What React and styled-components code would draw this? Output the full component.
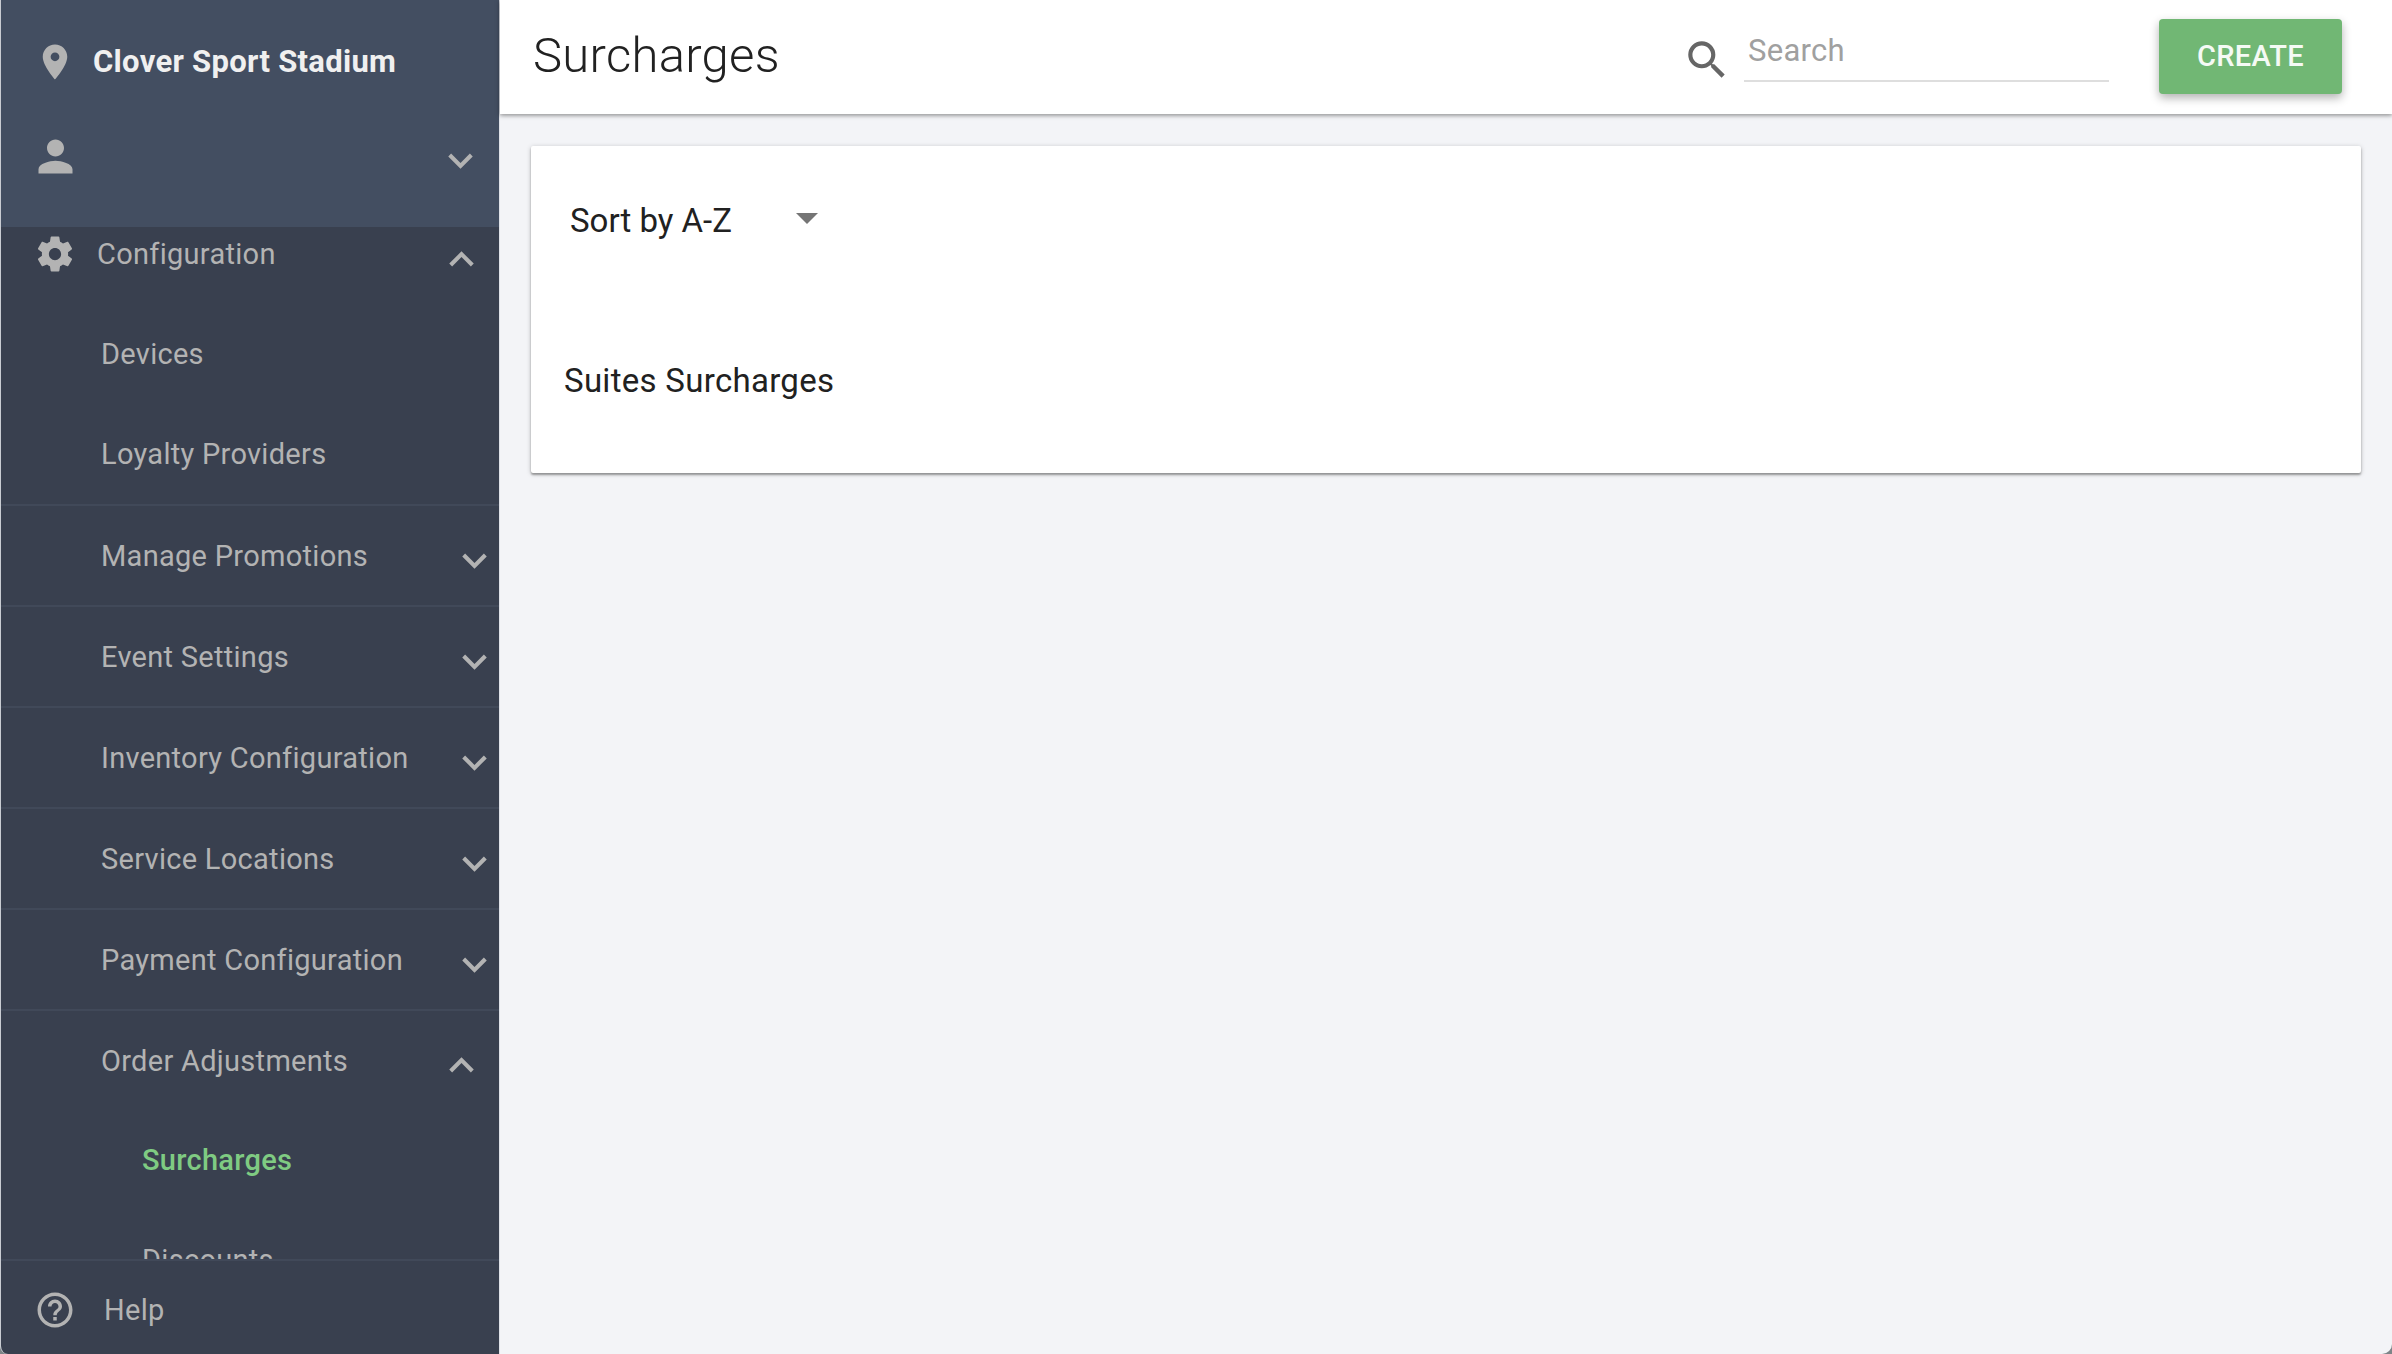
import React, { useState } from "react";
import styled, { createGlobalStyle, css } from "styled-components";
import { MdExpandLess, MdExpandMore, MdHelpOutline, MdPerson, MdPlace, MdSearch } from "react-icons/md";

const GlobalStyle = createGlobalStyle`
  *, *::before, *::after { box-sizing: border-box; }
  body {
    margin: 0;
    background: #7d8588;
    color: #212121;
    font-family: Roboto, "Liberation Sans", sans-serif;
    font-size: 29px;
    letter-spacing: 0.01em;
  }
  button, input, select { font: inherit; letter-spacing: inherit; color: inherit; }
  ul { list-style: none; margin: 0; padding: 0; }
`;

const Shell = styled.div`
  display: flex;
  height: 100vh;
  overflow: hidden;
  border-left: 1px solid #c9ccd2;
  border-radius: 0 0 10px 8px;
  background: #f3f4f7;
`;

const Sidebar = styled.aside`
  display: flex;
  flex-direction: column;
  flex: 0 0 498px;
  background: #39404f;
  color: #b3b3b3;
`;

const Account = styled.div`
  flex: none;
  background: #434e61;
  padding-bottom: 38px;
`;

const IconSlot = styled.span`
  display: flex;
  flex: none;
  justify-content: center;
  width: ${(p) => p.$width || 92}px;
  padding-right: ${(p) => (p.$width || 92) - 82}px;
  padding-left: 26px;
  svg { flex: none; }
`;

const Venue = styled.div`
  display: flex;
  align-items: center;
  height: 123px;
  color: #f0f0f0;
  font-size: 31px;
  font-weight: 700;
  svg { color: #b3b3b3; }
`;

const UserButton = styled.button`
  display: flex;
  align-items: center;
  width: 100%;
  height: 66px;
  padding: 0 14px 0 0;
  border: 0;
  background: none;
  color: #b3b3b3;
`;

const Nav = styled.nav`
  flex: 1;
  min-height: 0;
  overflow: hidden;
`;

const rowStyle = css`
  display: flex;
  align-items: center;
  width: 100%;
  height: 100px;
  border: 0;
  background: none;
  color: inherit;
  text-align: left;
  text-decoration: none;
`;

const SectionButton = styled.button`
  ${rowStyle}
  height: 77px;
  padding: 0 13px 23px 0;
`;

const GroupButton = styled.button`
  ${rowStyle}
  height: 101px;
  padding: 0 ${(p) => (p.$open ? 13 : 0)}px 0 100px;
  border-top: 2px solid #414959;
`;

const NavLink = styled.a`
  ${rowStyle}
  padding-left: ${(p) => (p.$nested ? 141 : 100)}px;
  color: ${(p) => (p.$active ? "#7fcb82" : "inherit")};
  font-weight: ${(p) => (p.$active ? 500 : 400)};
`;

const Chevron = styled.span`
  display: flex;
  margin: ${(p) => p.$drop || 10}px 0 0 auto;
`;

const HelpLink = styled.a`
  ${rowStyle}
  flex: none;
  height: 95px;
  padding-top: 4px;
  border-top: 2px solid #414959;
`;

const Main = styled.main`
  flex: 1;
  min-width: 0;
  border-left: 1px solid #dfe2e8;
`;

const TopBar = styled.header`
  display: flex;
  height: 114px;
  padding: 0 50px 0 33px;
  background: #fff;
  box-shadow: 0 1px 5px rgba(0, 0, 0, 0.35), 0 2px 3px rgba(0, 0, 0, 0.12);
`;

const Title = styled.h1`
  flex: 1;
  margin: 0;
  font-size: 49px;
  font-weight: 300;
  line-height: 112px;
`;

const SearchBox = styled.label`
  display: flex;
  align-items: flex-start;
  gap: 12px;
  margin-right: 50px;
  padding-top: 20px;
  > svg { margin-top: 15px; color: #666; }
`;

const SearchInput = styled.input`
  width: 365px;
  height: 62px;
  padding: 0 4px;
  border: 0;
  border-bottom: 2px solid #dedede;
  outline: 0;
  background: none;
  font-size: 31px;
  &::placeholder { color: #a0a0a0; opacity: 1; }
`;

const CreateButton = styled.button`
  width: 183px;
  height: 75px;
  margin-top: 19px;
  padding: 0 0 2px;
  border: 0;
  border-radius: 4px;
  background: #71b774;
  color: #f5faf5;
  font-weight: 500;
  text-transform: uppercase;
  box-shadow: 0 4px 10px rgba(0, 0, 0, 0.3);
`;

const Card = styled.section`
  margin: 32px 31px;
  padding: 48px 33px 66px;
  background: #fff;
  border-radius: 2px;
  box-shadow: 0 2px 2px rgba(0, 0, 0, 0.3), 0 1px 5px rgba(0, 0, 0, 0.22);
  font-size: 33px;
`;

const SortField = styled.label`
  display: flex;
  align-items: center;
  margin-left: 6px;
  height: 52px;
  letter-spacing: 0;
  svg { margin: -4px 0 0 -22px; pointer-events: none; }
`;

const SortSelect = styled.select`
  width: 248px;
  height: 52px;
  padding: 0;
  border: 0;
  outline: 0;
  appearance: none;
  background: none;
`;

const SurchargeList = styled.ul`
  margin-top: 109px;
  line-height: 52px;
`;

const Gear = () => (
  <svg width="42" height="42" viewBox="0 0 24 24" fill="currentColor" aria-hidden="true">
    <path d="M19.43 12.98c.04-.32.07-.64.07-.98s-.03-.66-.07-.98l2.11-1.65c.19-.15.24-.42.12-.64l-2-3.46c-.12-.22-.39-.3-.61-.22l-2.49 1c-.52-.4-1.08-.73-1.69-.98l-.38-2.65C14.46 2.18 14.25 2 14 2h-4c-.25 0-.46.18-.49.42l-.38 2.65c-.61.25-1.17.59-1.69.98l-2.49-1c-.23-.09-.49 0-.61.22l-2 3.46c-.13.22-.07.49.12.64l2.11 1.65c-.04.32-.07.65-.07.98s.03.66.07.98l-2.11 1.65c-.19.15-.24.42-.12.64l2 3.46c.12.22.39.3.61.22l2.49-1c.52.4 1.08.73 1.69.98l.38 2.65c.03.24.24.42.49.42h4c.25 0 .46-.18.49-.42l.38-2.65c.61-.25 1.17-.59 1.69-.98l2.49 1c.23.09.49 0 .61-.22l2-3.46c.12-.22.07-.49-.12-.64l-2.11-1.65zM12 15.5c-1.93 0-3.5-1.57-3.5-3.5s1.57-3.5 3.5-3.5 3.5 1.57 3.5 3.5-1.57 3.5-3.5 3.5z" />
  </svg>
);

const groups = [
  "Manage Promotions",
  "Event Settings",
  "Inventory Configuration",
  "Service Locations",
  "Payment Configuration",
];

function Group({ label, open }) {
  return (
    <GroupButton type="button" $open={open} aria-expanded={Boolean(open)}>
      {label}
      <Chevron>{open ? <MdExpandLess size={49} /> : <MdExpandMore size={49} />}</Chevron>
    </GroupButton>
  );
}

export default function App() {
  const [query, setQuery] = useState("");
  return (
    <>
      <GlobalStyle />
      <Shell>
        <Sidebar>
          <Account>
            <Venue>
              <IconSlot><MdPlace size={42} /></IconSlot>
              Clover Sport Stadium
            </Venue>
            <UserButton type="button" aria-label="Account">
              <IconSlot><MdPerson size={51} /></IconSlot>
              <Chevron $drop={8}><MdExpandMore size={49} /></Chevron>
            </UserButton>
          </Account>
          <Nav>
            <SectionButton type="button" aria-expanded="true">
              <IconSlot $width={96}><Gear /></IconSlot>
              Configuration
              <Chevron><MdExpandLess size={49} /></Chevron>
            </SectionButton>
            <NavLink href="#devices">Devices</NavLink>
            <NavLink href="#loyalty">Loyalty Providers</NavLink>
            {groups.map((g) => <Group key={g} label={g} />)}
            <Group label="Order Adjustments" open />
            <NavLink href="#surcharges" $nested $active aria-current="page">Surcharges</NavLink>
            <NavLink href="#discounts" $nested>Discounts</NavLink>
          </Nav>
          <HelpLink href="#help">
            <IconSlot $width={103}><MdHelpOutline size={42} /></IconSlot>
            Help
          </HelpLink>
        </Sidebar>
        <Main>
          <TopBar>
            <Title>Surcharges</Title>
            <SearchBox>
              <MdSearch size={50} aria-hidden="true" />
              <SearchInput
                type="search"
                placeholder="Search"
                aria-label="Search"
                value={query}
                onChange={(e) => setQuery(e.target.value)}
              />
            </SearchBox>
            <CreateButton type="button">Create</CreateButton>
          </TopBar>
          <Card>
            <SortField>
              <SortSelect aria-label="Sort order" defaultValue="az">
                <option value="az">Sort by A-Z</option>
                <option value="za">Sort by Z-A</option>
              </SortSelect>
              <svg width="22" height="11" viewBox="0 0 22 11" fill="#757575" aria-hidden="true">
                <path d="M0 0h22L11 11z" />
              </svg>
            </SortField>
            <SurchargeList>
              <li>Suites Surcharges</li>
            </SurchargeList>
          </Card>
        </Main>
      </Shell>
    </>
  );
}
